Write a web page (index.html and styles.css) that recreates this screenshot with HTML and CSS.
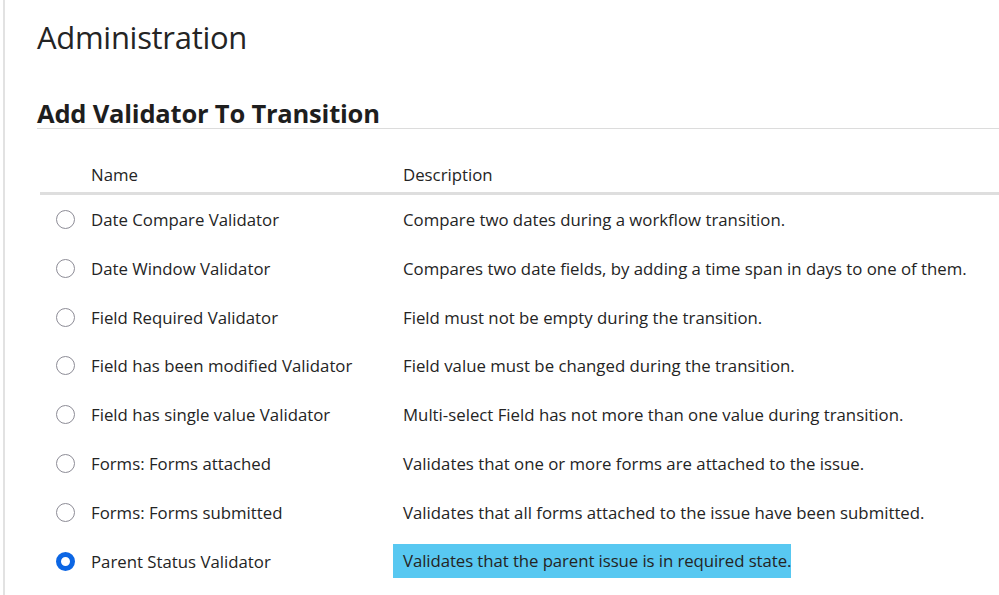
FILE: index.html
```html
<!DOCTYPE html>
<html lang="en">
<head>
<meta charset="utf-8">
<title>Administration</title>
<link rel="stylesheet" href="styles.css">
</head>
<body>
<div class="page">
  <h1 class="page-title">Administration</h1>
  <h2 class="section-title">Add Validator To Transition</h2>
  <table class="validators">
    <thead>
      <tr>
        <th class="col-radio"></th>
        <th class="col-name">Name</th>
        <th class="col-desc">Description</th>
      </tr>
    </thead>
    <tbody>
      <tr>
        <td class="col-radio"><span class="radio"></span></td>
        <td class="col-name">Date Compare Validator</td>
        <td class="col-desc">Compare two dates during a workflow transition.</td>
      </tr>
      <tr>
        <td class="col-radio"><span class="radio"></span></td>
        <td class="col-name">Date Window Validator</td>
        <td class="col-desc">Compares two date fields, by adding a time span in days to one of them.</td>
      </tr>
      <tr>
        <td class="col-radio"><span class="radio"></span></td>
        <td class="col-name">Field Required Validator</td>
        <td class="col-desc">Field must not be empty during the transition.</td>
      </tr>
      <tr>
        <td class="col-radio"><span class="radio"></span></td>
        <td class="col-name">Field has been modified Validator</td>
        <td class="col-desc">Field value must be changed during the transition.</td>
      </tr>
      <tr>
        <td class="col-radio"><span class="radio"></span></td>
        <td class="col-name">Field has single value Validator</td>
        <td class="col-desc">Multi-select Field has not more than one value during transition.</td>
      </tr>
      <tr>
        <td class="col-radio"><span class="radio"></span></td>
        <td class="col-name">Forms: Forms attached</td>
        <td class="col-desc">Validates that one or more forms are attached to the issue.</td>
      </tr>
      <tr>
        <td class="col-radio"><span class="radio"></span></td>
        <td class="col-name">Forms: Forms submitted</td>
        <td class="col-desc">Validates that all forms attached to the issue have been submitted.</td>
      </tr>
      <tr>
        <td class="col-radio"><span class="radio checked"></span></td>
        <td class="col-name">Parent Status Validator</td>
        <td class="col-desc"><span class="highlight">Validates that the parent issue is in required state.</span></td>
      </tr>
    </tbody>
  </table>
</div>
</body>
</html>
```

FILE: styles.css
```css
html, body {
  margin: 0;
  padding: 0;
  background: #ffffff;
  height: 100%;
  overflow: hidden;
}

body {
  font-family: "Open Sans", "Noto Sans", sans-serif;
  color: #242424;
}

.page {
  margin-left: 3px;
  border-left: 2px solid #e2e2e2;
  padding-left: 32px;
  min-height: 100%;
  box-sizing: border-box;
}

.page-title {
  margin: 0;
  padding-top: 15px;
  font-size: 31px;
  font-weight: 400;
  line-height: 44px;
  letter-spacing: -0.3px;
  color: #242424;
}

.section-title {
  margin: 39px 0 0 0;
  padding-bottom: 0;
  font-size: 25.5px;
  font-weight: 700;
  line-height: 30px;
  letter-spacing: -0.2px;
  color: #1e1e1e;
  border-bottom: 1px solid #dcdcdc;
}

.validators {
  margin-left: 3px;
  margin-top: 27px;
  width: calc(100% - 3px);
  border-collapse: collapse;
  font-size: 16.8px;
}

.validators th {
  font-weight: 400;
  text-align: left;
  height: 36px;
  padding: 0;
  vertical-align: middle;
  border-bottom: 3px solid #dedede;
}

.validators td {
  padding: 0;
  height: 48.85px;
  vertical-align: middle;
}

.col-radio {
  width: 51px;
}

.validators td.col-radio {
  padding-left: 16px;
  width: 35px;
}

.col-name {
  width: 312px;
}

.radio {
  display: block;
  width: 19px;
  height: 19px;
  box-sizing: border-box;
  border: 1.6px solid #8d8c96;
  border-radius: 50%;
  background: #ffffff;
}

.radio.checked {
  border: 5.5px solid #0c66e4;
}

.highlight {
  display: inline-block;
  margin-left: -10px;
  padding: 5px 0 6px 10px;
  letter-spacing: -0.08px;
  background: #58c8f1;
}
```
